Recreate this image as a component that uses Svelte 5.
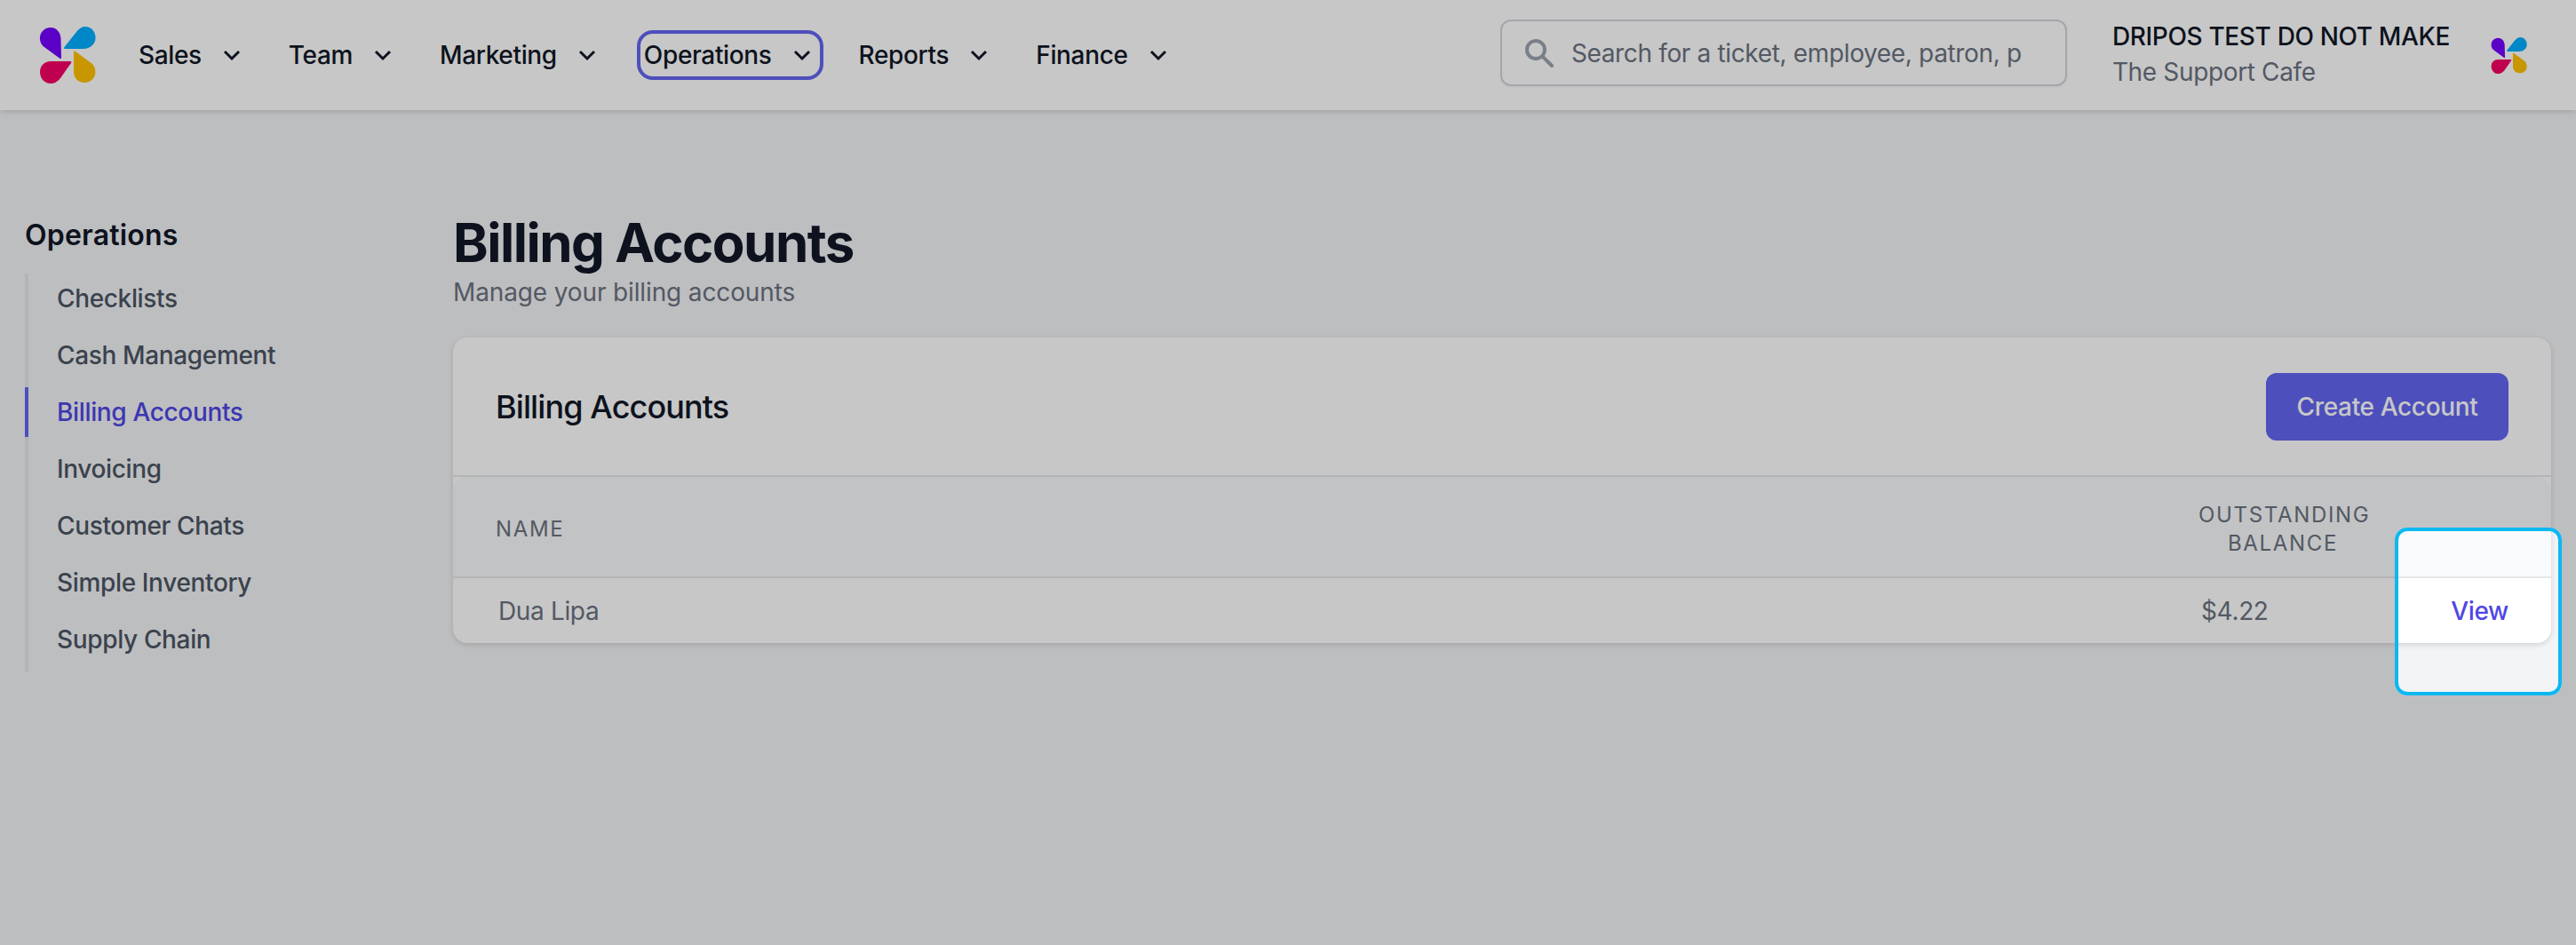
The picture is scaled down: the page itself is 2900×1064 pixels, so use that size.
<script>
  const nav = ['Sales', 'Team', 'Marketing', 'Operations', 'Reports', 'Finance'];
  const side = ['Checklists', 'Cash Management', 'Billing Accounts', 'Invoicing', 'Customer Chats', 'Simple Inventory', 'Supply Chain'];
</script>

{#snippet logo(cls)}
  <svg class={cls} viewBox="0 0 64 64" aria-hidden="true">
    <path fill="#7400ff" d="M24.5 14 L25 35 Q25 37 23 35.5 L4.5 22 C-3 14 2 1 13 1 C20 1 24.5 7 24.5 14 Z" />
    <path fill="#00aeff" d="M28.5 23 L42 6 C46 1 49 0 52 0 C59 0 63.5 6 63.5 12.5 C63.5 20 57 25 50 25 L30 25 Q27 25 28.5 23 Z" />
    <path fill="#f50065" d="M35 39 Q37 39 36 41 L24 58 C20 63 16 64 13 64 C6 64 1 58 1 51 C1 44 6 39 13 39 Z" />
    <path fill="#ffc000" d="M39 29 Q39 26 41 28 L60 42 C67 50 63 63 51 63 C44 63 39 58 39 51 Z" />
  </svg>
{/snippet}

<div class="page">
  <header class="top">
    {@render logo('logo')}
    <nav class="nav">
      {#each nav as item}
        <button class="nav-item" class:focused={item === 'Operations'}>
          <span>{item}</span>
          <svg class="chev" viewBox="0 0 40 40" aria-hidden="true"><path d="M12 16 L20 24 L28 16" /></svg>
        </button>
      {/each}
    </nav>
    <div class="search">
      <svg class="search-icon" viewBox="0 0 20 20" aria-hidden="true">
        <path fill-rule="evenodd" clip-rule="evenodd" d="M8 4a4 4 0 100 8 4 4 0 000-8zM2 8a6 6 0 1110.89 3.476l4.817 4.817a1 1 0 01-1.414 1.414l-4.816-4.816A6 6 0 012 8z" />
      </svg>
      <span class="placeholder">Search for a ticket, employee, patron, p</span>
    </div>
    <div class="account">
      <div class="account-name">DRIPOS TEST DO NOT MAKE</div>
      <div class="account-shop">The Support Cafe</div>
    </div>
    {@render logo('logo-small')}
  </header>

  <div class="body">
    <aside class="side">
      <h2 class="side-title">Operations</h2>
      <ul class="side-list">
        {#each side as item}
          <li class="side-item" class:active={item === 'Billing Accounts'}>{item}</li>
        {/each}
      </ul>
    </aside>

    <main class="main">
      <h1 class="title">Billing Accounts</h1>
      <p class="sub">Manage your billing accounts</p>

      <section class="card">
        <div class="card-head">
          <h3 class="card-title">Billing Accounts</h3>
          <button class="primary">Create Account</button>
        </div>
        <div class="row thead">
          <div class="th">NAME</div>
          <div class="th center">OUTSTANDING BALANCE</div>
          <div></div>
        </div>
        <div class="row tbody">
          <div class="td name">Dua Lipa</div>
          <div class="td amount">$4.22</div>
          <div class="view">View</div>
        </div>
      </section>
    </main>
  </div>

  <div class="spotlight"></div>
</div>

<style>
  :global(body) {
    margin: 0;
    background: #f3f4f6;
    overflow: hidden;
  }
  .page {
    position: relative;
    height: 1064px;
    overflow: hidden;
    background: #f3f4f6;
    font-family: Inter, "Liberation Sans", sans-serif;
    color: #111827;
    letter-spacing: -0.35px;
  }
  .top {
    display: flex;
    align-items: center;
    height: 124px;
    box-sizing: border-box;
    padding: 0 55px 0 44px;
    background: #fff;
    box-shadow: 0 2px 6px rgba(0, 0, 0, 0.14);
  }
  .logo {
    width: 64px;
    height: 64px;
    flex: none;
  }
  .logo-small {
    width: 41px;
    height: 41px;
    margin-left: 46px;
    flex: none;
  }
  .nav {
    display: flex;
    gap: 32px;
    margin-left: 40px;
  }
  .nav-item {
    display: flex;
    align-items: center;
    height: 56px;
    box-sizing: border-box;
    padding: 0 0 0 4px;
    border: 4px solid transparent;
    border-radius: 18px;
    background: none;
    font: 500 28px/40px Inter, "Liberation Sans", sans-serif;
    letter-spacing: inherit;
    color: #111827;
  }
  .nav-item.focused {
    border-color: #6366f1;
  }
  .chev {
    width: 40px;
    height: 40px;
    margin-left: 14px;
  }
  .chev path {
    fill: none;
    stroke: #111827;
    stroke-width: 3;
  }
  .search {
    display: flex;
    align-items: center;
    width: 638px;
    height: 75px;
    box-sizing: border-box;
    margin: 0 0 5px auto;
    padding-left: 22px;
    border: 2px solid #d1d5db;
    border-radius: 12px;
    background: #fff;
    box-shadow: 0 1px 2px rgba(0, 0, 0, 0.05);
  }
  .search-icon {
    width: 40px;
    height: 40px;
    fill: #9ca3af;
    flex: none;
  }
  .placeholder {
    margin-left: 16px;
    font-size: 28px;
    color: #6b7280;
    white-space: nowrap;
  }
  .account {
    margin: 0 0 3px 51px;
  }
  .account-name {
    font-size: 28px;
    line-height: 40px;
    font-weight: 500;
    color: #111827;
  }
  .account-shop {
    font-size: 28px;
    line-height: 40px;
    color: #6b7280;
  }
  .body {
    display: flex;
    padding-right: 28px;
  }
  .side {
    flex: none;
    width: 482px;
    margin-left: 28px;
  }
  .side-title {
    margin: 117px 0 19px;
    font-size: 32px;
    line-height: 48px;
    font-weight: 600;
    letter-spacing: 0.2px;
    color: #111827;
  }
  .side-list {
    display: flex;
    flex-direction: column;
    gap: 8px;
    list-style: none;
    margin: 0;
    padding: 0 0 8px;
    border-left: 4px solid #e5e7eb;
    width: 400px;
  }
  .side-item {
    height: 56px;
    margin-left: -4px;
    padding-left: 32px;
    border-left: 4px solid transparent;
    font-size: 28px;
    line-height: 56px;
    font-weight: 500;
    color: #4b5563;
  }
  .side-item.active {
    border-left-color: #6366f1;
    color: #4f46e5;
  }
  .main {
    flex: 1;
    min-width: 0;
  }
  .title {
    margin: 113px 0 0;
    font-size: 60px;
    line-height: 72px;
    font-weight: 700;
    letter-spacing: -1.5px;
    color: #111827;
  }
  .sub {
    margin: 0 0 31px;
    font-size: 28px;
    line-height: 40px;
    letter-spacing: -0.13px;
    color: #6b7280;
  }
  .card {
    border-radius: 16px;
    background: #fff;
    box-shadow: 0 2px 6px rgba(0, 0, 0, 0.14);
  }
  .card-head {
    display: flex;
    align-items: center;
    justify-content: space-between;
    height: 157px;
    box-sizing: border-box;
    padding: 0 48px;
    border-bottom: 2px solid #e5e7eb;
  }
  .card-title {
    margin: 0;
    font-size: 36px;
    line-height: 48px;
    font-weight: 500;
    letter-spacing: -0.9px;
    color: #111827;
  }
  .primary {
    width: 273px;
    height: 76px;
    padding: 0;
    border: 0;
    border-radius: 12px;
    background: #6366f1;
    color: #fff;
    font: 500 28px/40px Inter, "Liberation Sans", sans-serif;
    letter-spacing: inherit;
  }
  .row {
    display: grid;
    grid-template-columns: 1fr 190px 161px;
    align-items: center;
    padding: 0 48px;
    box-sizing: border-box;
  }
  .thead {
    height: 114px;
    padding-top: 5px;
    background: #f9fafb;
    border-bottom: 2px solid #e5e7eb;
    border-radius: 16px 16px 0 0;
  }
  .th {
    font-size: 24px;
    line-height: 32px;
    font-weight: 400;
    letter-spacing: 0.07em;
    color: #6b7280;
  }
  .center {
    text-align: center;
    transform: translateX(2px);
  }
  .tbody {
    height: 73px;
  }
  .td {
    font-size: 28px;
    color: #6b7280;
  }
  .name {
    padding-left: 3px;
  }
  .amount {
    padding-left: 5px;
  }
  .view {
    text-align: right;
    font-size: 28px;
    font-weight: 500;
    color: #4f46e5;
  }
  .spotlight {
    position: absolute;
    left: 2696px;
    top: 594px;
    width: 188px;
    height: 189px;
    box-sizing: border-box;
    border: 4px solid #0ab8f2;
    border-radius: 14px;
    box-shadow: 0 0 0 3000px rgba(0, 0, 0, 0.22);
  }
</style>
